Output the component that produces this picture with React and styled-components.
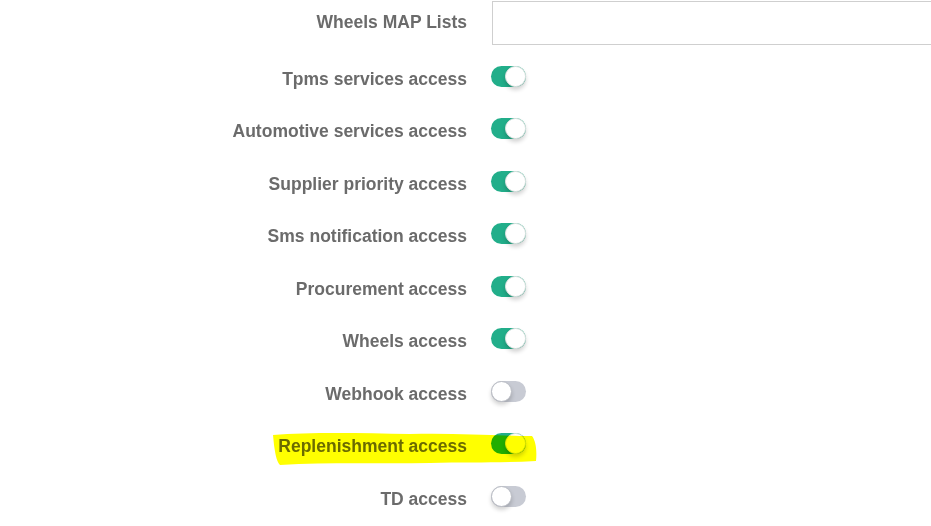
import React from "react";
import styled, { createGlobalStyle } from "styled-components";

const Global = createGlobalStyle`
  html, body { margin: 0; padding: 0; background: #ffffff; }
  body { font-family: "Liberation Sans", Arial, sans-serif; overflow: hidden; }
`;

const Form = styled.div`
  position: relative;
  width: 931px;
  height: 526px;
  display: flex;
  flex-direction: column;
`;

const Row = styled.div`
  display: grid;
  grid-template-columns: 467px 1fr;
  column-gap: 24px;
  align-items: center;
  height: ${(p) => (p.$first ? "45px" : "52.5px")};
  margin-bottom: ${(p) => (p.$first ? "8px" : "0")};
`;

const Label = styled.label`
  justify-self: end;
  font-size: 17.5px;
  font-weight: 700;
  color: #6b6b6b;
  white-space: nowrap;
  position: relative;
  z-index: 0;
  margin-top: ${(p) => (p.$first ? "-1px" : "0")};
`;

const TextBox = styled.div`
  height: 42px;
  margin-left: 1px;
  border: 1px solid #cfcfcf;
  border-right: none;
  background: #fff;
`;

const Track = styled.span`
  position: relative;
  display: inline-block;
  width: 35px;
  height: 21px;
  border-radius: 11px;
  background: ${(p) => (p.$on ? "#22ae8a" : "#c8cbd4")};
  margin-top: -2px;
`;

const Knob = styled.span`
  position: absolute;
  top: 0;
  left: ${(p) => (p.$on ? "14px" : "0")};
  width: 21px;
  height: 21px;
  border-radius: 50%;
  background: #fff;
  box-sizing: border-box;
  border: 1px solid ${(p) => (p.$on ? "#e6e6e6" : "#b9bcc4")};
  box-shadow: 0 3px 4px rgba(0, 0, 0, 0.18);
`;

const Highlight = styled.svg`
  position: absolute;
  left: 270px;
  top: 431px;
  width: 268px;
  height: 35px;
  mix-blend-mode: multiply;
  pointer-events: none;
  z-index: 2;
`;

const Toggle = ({ on }) => (
  <Track $on={on}>
    <Knob $on={on} />
  </Track>
);

const rows = [
  ["Tpms services access", true],
  ["Automotive services access", true],
  ["Supplier priority access", true],
  ["Sms notification access", true],
  ["Procurement access", true],
  ["Wheels access", true],
  ["Webhook access", false],
  ["Replenishment access", true],
  ["TD access", false],
];

export default function App() {
  return (
    <>
      <Global />
      <Form>
        <Row $first>
          <Label $first>Wheels MAP Lists</Label>
          <TextBox />
        </Row>
        {rows.map(([name, on]) => (
          <Row key={name}>
            <Label>{name}</Label>
            <div>
              <Toggle on={on} />
            </div>
          </Row>
        ))}
        <Highlight viewBox="0 0 268 35">
          <path
            d="M3 4 C40 1 90 2 140 3 C180 2 215 4 250 5 L262 5 C266 10 267 20 266 30 C230 32 200 31 160 32 C110 33 60 31 10 34 C6 30 5 20 4 14 Z"
            fill="#ffff00"
          />
        </Highlight>
      </Form>
    </>
  );
}
